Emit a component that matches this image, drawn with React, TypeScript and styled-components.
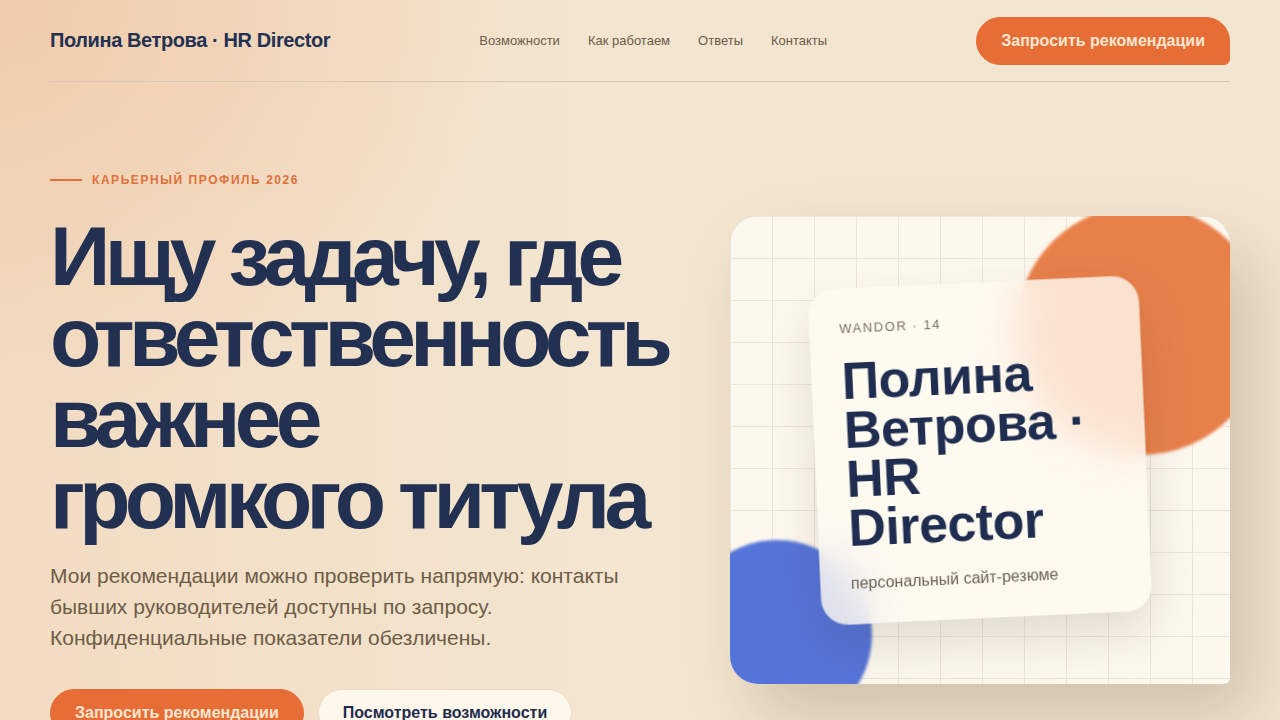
import styled, { createGlobalStyle } from "styled-components";

const GlobalStyle = createGlobalStyle`
  * { box-sizing: border-box; }
  html, body { margin: 0; padding: 0; }
  body {
    font-family: "Liberation Sans", Arial, sans-serif;
    background: #f3e6d1;
    overflow: hidden;
  }
`;

const Page = styled.div`
  width: 1280px;
  height: 720px;
  overflow: hidden;
  background:
    radial-gradient(ellipse 520px 420px at 0% 0%, rgba(240, 200, 168, 0.85), rgba(240, 200, 168, 0) 100%),
    linear-gradient(90deg, #f2dcc2 0%, #f3e5cf 45%, #f3e6d1 100%);
`;

const Container = styled.div`
  width: 1180px;
  margin: 0 auto;
`;

const Header = styled.header`
  display: flex;
  align-items: center;
  justify-content: space-between;
  height: 82px;
  border-bottom: 1px solid #d9c8b3;
`;

const Logo = styled.div`
  font-weight: 700;
  font-size: 20px;
  color: #243152;
  letter-spacing: -0.02em;
`;

const Nav = styled.nav`
  display: flex;
  gap: 28px;
`;

const NavLink = styled.a`
  font-size: 13px;
  color: #6b5b4a;
  text-decoration: none;
`;

const Button = styled.button<{ $variant?: "primary" | "ghost" }>`
  font-family: "Liberation Sans", Arial, sans-serif;
  font-weight: 700;
  font-size: 16px;
  height: 48px;
  padding: 0 24px;
  border-radius: 24px;
  cursor: pointer;
  border: 1px solid ${(p) => (p.$variant === "ghost" ? "#eadcc8" : "#e66d35")};
  background: ${(p) => (p.$variant === "ghost" ? "#fdf7ec" : "#e66d35")};
  color: ${(p) => (p.$variant === "ghost" ? "#1f2b4d" : "#fde6d0")};
`;

const HeaderButton = styled(Button)`
  border-bottom-right-radius: 6px;
`;

const Hero = styled.section`
  display: grid;
  grid-template-columns: minmax(0, 1fr) 500px;
  gap: 49px;
  align-items: start;
  padding-top: 90px;
`;

const Left = styled.div`
  display: flex;
  flex-direction: column;
`;

const Eyebrow = styled.div`
  display: flex;
  align-items: center;
  gap: 10px;
  height: 16px;
  font-size: 12px;
  font-weight: 700;
  letter-spacing: 0.13em;
  color: #e0703a;
  &::before {
    content: "";
    width: 32px;
    height: 2px;
    background: #e0703a;
  }
`;

const Title = styled.h1`
  margin: 28px 0 0;
  max-width: 600px;
  font-weight: 700;
  font-size: 84px;
  line-height: 81px;
  letter-spacing: -0.068em;
  color: #223052;
`;

const Lead = styled.p`
  margin: 20px 0 0;
  max-width: 600px;
  font-size: 21px;
  line-height: 31px;
  color: #6e5c47;
`;

const Actions = styled.div`
  display: flex;
  gap: 14px;
  margin-top: 36px;
`;

const Visual = styled.div`
  position: relative;
  margin-top: 44px;
  height: 468px;
  border-radius: 28px 28px 6px 28px;
  overflow: hidden;
  display: flex;
  align-items: center;
  justify-content: center;
  background-color: #fdf8ee;
  background-image:
    linear-gradient(#ece4d7 1px, transparent 1px),
    linear-gradient(90deg, #ece4d7 1px, transparent 1px);
  background-size: 42px 42px;
  background-position: 0 0;
  box-shadow: 24px 34px 70px rgba(70, 45, 20, 0.2);
`;

const Blob = styled.div<{ $color: string; $size: number }>`
  position: absolute;
  width: ${(p) => p.$size}px;
  height: ${(p) => p.$size}px;
  border-radius: 50%;
  background: ${(p) => p.$color};
  filter: blur(1.5px);
`;

const OrangeBlob = styled(Blob)`
  top: -11px;
  right: -36px;
`;

const BlueBlob = styled(Blob)`
  bottom: -46px;
  left: -48px;
`;

const Card = styled.div`
  position: relative;
  width: 330px;
  height: 335px;
  padding: 32px 36px 28px 30px;
  border-radius: 26px;
  transform: rotate(-2.6deg);
  background: rgba(255, 250, 240, 0.8);
  backdrop-filter: blur(22px);
  box-shadow: 0 22px 50px rgba(60, 40, 20, 0.14), 0 0 0 1px rgba(255, 255, 255, 0.5);
`;

const CardTag = styled.div`
  font-size: 13px;
  line-height: 16px;
  letter-spacing: 0.12em;
  color: #7a7060;
`;

const CardTitle = styled.div`
  margin-top: 20px;
  font-size: 52px;
  line-height: 49px;
  font-weight: 700;
  letter-spacing: -0.01em;
  color: #1f2d50;
`;

const CardNote = styled.div`
  margin-top: 21px;
  font-size: 16px;
  line-height: 20px;
  color: #6b6155;
`;

export default function App() {
  return (
    <Page>
      <GlobalStyle />
      <Container>
        <Header>
          <Logo>Полина Ветрова · HR Director</Logo>
          <Nav>
            <NavLink href="#features">Возможности</NavLink>
            <NavLink href="#how">Как работаем</NavLink>
            <NavLink href="#faq">Ответы</NavLink>
            <NavLink href="#contacts">Контакты</NavLink>
          </Nav>
          <HeaderButton>Запросить рекомендации</HeaderButton>
        </Header>
        <Hero>
          <Left>
            <Eyebrow>КАРЬЕРНЫЙ ПРОФИЛЬ 2026</Eyebrow>
            <Title>
              Ищу задачу, где ответственность важнее громкого титула
            </Title>
            <Lead>
              Мои рекомендации можно проверить напрямую: контакты бывших
              руководителей доступны по запросу. Конфиденциальные показатели
              обезличены.
            </Lead>
            <Actions>
              <Button>Запросить рекомендации</Button>
              <Button $variant="ghost">Посмотреть возможности</Button>
            </Actions>
          </Left>
          <Visual>
            <OrangeBlob $color="#e8804a" $size={250} />
            <BlueBlob $color="#5574d9" $size={190} />
            <Card>
              <CardTag>WANDOR · 14</CardTag>
              <CardTitle>Полина Ветрова · HR Director</CardTitle>
              <CardNote>персональный сайт-резюме</CardNote>
            </Card>
          </Visual>
        </Hero>
      </Container>
    </Page>
  );
}
